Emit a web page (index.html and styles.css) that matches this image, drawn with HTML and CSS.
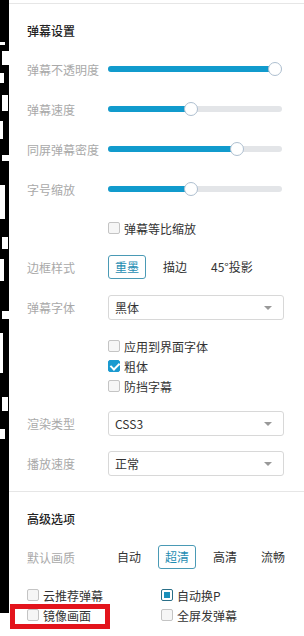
FILE: index.html
```html
<!DOCTYPE html>
<html lang="zh-CN">
<head>
<meta charset="UTF-8" />
<meta name="viewport" content="width=device-width, initial-scale=1" />
<title>弹幕设置</title>
<link rel="stylesheet" href="styles.css">
</head>
<body>

<div class="page">
  <div class="video">
    <i class="frag" style="--t:42px;--w:5px;--h:3px"></i>
    <i class="frag" style="--t:6px;--w:7px;--h:14px"></i>
    <i class="frag" style="--t:8px;--w:4px;--h:10px"></i>
    <i class="frag" style="--t:12px;--w:6px;--h:16px"></i>
    <i class="frag" style="--t:10px;--w:3px;--h:18px"></i>
    <i class="frag" style="--t:16px;--w:7px;--h:6px"></i>
    <i class="frag" style="--t:24px;--w:5px;--h:34px"></i>
    <i class="frag" style="--t:18px;--w:6px;--h:12px"></i>
    <i class="frag" style="--t:10px;--w:4px;--h:22px"></i>
    <i class="frag" style="--t:30px;--w:7px;--h:8px"></i>
    <i class="frag" style="--t:14px;--w:3px;--h:40px"></i>
    <i class="frag" style="--t:24px;--w:6px;--h:14px"></i>
    <i class="frag" style="--t:18px;--w:5px;--h:10px"></i>
  </div>

  <div class="panel">
    <section class="group">
      <h3 class="group-title">弹幕设置</h3>

      <div class="row">
        <span class="label">弹幕不透明度</span>
        <div class="slider" style="--v:1"><div class="fill"></div><span class="thumb"></span></div>
      </div>
      <div class="row">
        <span class="label">弹幕速度</span>
        <div class="slider" style="--v:0.475"><div class="fill"></div><span class="thumb"></span></div>
      </div>
      <div class="row">
        <span class="label">同屏弹幕密度</span>
        <div class="slider" style="--v:0.76"><div class="fill"></div><span class="thumb"></span></div>
      </div>
      <div class="row">
        <span class="label">字号缩放</span>
        <div class="slider" style="--v:0.475"><div class="fill"></div><span class="thumb"></span></div>
      </div>

      <div class="row row-check">
        <label class="check"><span class="box"></span>弹幕等比缩放</label>
      </div>

      <div class="row">
        <span class="label">边框样式</span>
        <div class="options">
          <span class="opt active">重墨</span>
          <span class="opt">描边</span>
          <span class="opt">45°投影</span>
        </div>
      </div>

      <div class="row">
        <span class="label">弹幕字体</span>
        <div class="select">黑体<span class="caret"></span></div>
      </div>

      <div class="checks">
        <label class="check"><span class="box"></span>应用到界面字体</label>
        <label class="check"><span class="box checked"></span>粗体</label>
        <label class="check"><span class="box"></span>防挡字幕</label>
      </div>

      <div class="row">
        <span class="label">渲染类型</span>
        <div class="select">CSS3<span class="caret"></span></div>
      </div>
      <div class="row">
        <span class="label">播放速度</span>
        <div class="select">正常<span class="caret"></span></div>
      </div>
    </section>

    <section class="group group-adv">
      <h3 class="group-title">高级选项</h3>
      <div class="row">
        <span class="label label-wide">默认画质</span>
        <div class="options">
          <span class="opt">自动</span>
          <span class="opt active">超清</span>
          <span class="opt">高清</span>
          <span class="opt">流畅</span>
        </div>
      </div>
      <div class="adv-checks">
        <label class="check"><span class="box"></span>云推荐弹幕</label>
        <label class="check"><span class="box square"></span>自动换P</label>
        <label class="check"><span class="box"></span>镜像画面</label>
        <label class="check"><span class="box"></span>全屏发弹幕</label>
      </div>
    </section>
  </div>

  <div class="mark"></div>
</div>

</body>
</html>
```

FILE: styles.css
```css
* { box-sizing: border-box; }
body {
  margin: 0;
  padding: 0;
  background: #fff;
  font-family: "Noto Sans CJK SC", "Noto Sans", sans-serif;
  font-size: 12px;
  color: #333;
}
.page {
  position: relative;
  display: flex;
  width: 304px;
  height: 636px;
  overflow: hidden;
}
.video {
  display: flex;
  flex-direction: column;
  align-items: flex-start;
  width: 9px;
  height: 613px;
  background: #000;
  overflow: hidden;
  flex-shrink: 0;
}
.frag {
  display: block;
  margin-top: var(--t);
  width: var(--w);
  height: var(--h);
  background: #fff;
}
.frag:nth-child(even) { margin-left: 2px; }
.panel {
  flex: 1;
  padding-top: 3px;
}
.group {
  border-top: 1px solid #e6e6e6;
  padding: 16px 0 8px 18px;
}
.group-title {
  margin: 0 0 7px;
  height: 22px;
  line-height: 22px;
  font-size: 12px;
  font-weight: 500;
  color: #222;
}
.row {
  display: flex;
  align-items: center;
  height: 40px;
}
.row-check { height: 38px; padding-left: 81px; }
.label {
  width: 81px;
  flex-shrink: 0;
  color: #a9a9a9;
}
.label-wide { width: 83px; }

/* sliders */
.slider {
  position: relative;
  width: 174px;
  height: 14px;
}
.slider::before,
.fill {
  content: "";
  position: absolute;
  top: 4px;
  left: 0;
  height: 6px;
  border-radius: 3px;
}
.slider::before {
  width: 100%;
  background: #e3e5e8;
}
.fill {
  width: calc(var(--v) * 160px + 7px);
  background: #119bcd;
}
.thumb {
  position: absolute;
  top: 0;
  left: calc(var(--v) * 160px);
  width: 14px;
  height: 14px;
  border-radius: 50%;
  background: #fff;
  border: 1px solid #aebfd0;
}

/* checkboxes */
.check {
  display: flex;
  align-items: center;
  height: 20px;
  color: #333;
}
.box {
  width: 12px;
  height: 12px;
  margin-right: 4px;
  border: 1px solid #c4c4c4;
  border-radius: 2px;
  background: #f6f6f6;
  position: relative;
}
.box.checked {
  background: #1a9ad0;
  border-color: #1a9ad0;
}
.box.checked::after {
  content: "";
  position: absolute;
  left: 3px;
  top: 0px;
  width: 4px;
  height: 7px;
  border: solid #fff;
  border-width: 0 2px 2px 0;
  transform: rotate(45deg);
}
.box.square {
  border-color: #2a6f88;
  background: #fff;
  padding: 2px;
}
.box.square::after {
  content: "";
  display: block;
  width: 100%;
  height: 100%;
  background: #1a8fba;
}
.checks {
  padding: 9px 0 7px 81px;
}

/* option buttons */
.options {
  display: flex;
  gap: 10px;
}
.opt {
  padding: 0 6px;
  height: 24px;
  line-height: 22px;
  border: 1px solid transparent;
  border-radius: 3px;
  color: #333;
}
.opt.active {
  border-color: #4a9ab5;
  color: #1e8db2;
}

/* selects */
.select {
  position: relative;
  width: 176px;
  height: 25px;
  line-height: 23px;
  padding-left: 6px;
  border: 1px solid #d8d8d8;
  border-radius: 3px;
  color: #333;
}
.caret {
  position: absolute;
  right: 11px;
  top: 10px;
  border: 4px solid transparent;
  border-top: 4px solid #999;
  border-bottom: 0;
}

.group-adv { padding-bottom: 0; }
.adv-checks {
  display: grid;
  grid-template-columns: 134px 1fr;
  padding-top: 8px;
}

.mark {
  position: absolute;
  left: 10px;
  top: 604px;
  width: 100px;
  height: 25px;
  border: 5px solid #e3141c;
}
```
